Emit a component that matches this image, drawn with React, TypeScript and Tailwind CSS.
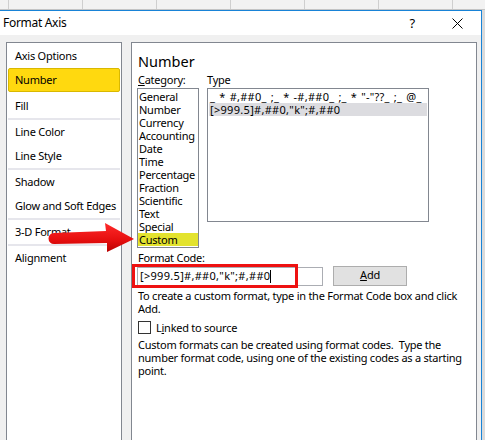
import React from "react";

const leftItems: (string | null)[] = [
  "Axis Options",
  "Number",
  "gap",
  "Fill",
  null,
  "Line Color",
  "Line Style",
  null,
  "Shadow",
  "Glow and Soft Edges",
  null,
  "3-D Format",
  null,
  "Alignment",
];

const categories = [
  "General",
  "Number",
  "Currency",
  "Accounting",
  "Date",
  "Time",
  "Percentage",
  "Fraction",
  "Scientific",
  "Text",
  "Special",
  "Custom",
];

export default function App() {
  return (
    <div className="relative w-[485px] h-[440px] overflow-hidden bg-[#f0f0f0] font-['Noto_Sans',sans-serif] text-[11px] tracking-[-0.25px] text-[#000]">
      {/* spreadsheet strip behind dialog */}
      <div className="flex h-[10px] bg-[#f2f2f2] border-b border-[#c4c4c4]">
        <div className="w-[8px] shrink-0" />
        {Array.from({ length: 7 }).map((_, i) => (
          <div key={i} className="w-[74px] shrink-0 border-l border-[#cfcfcf]" />
        ))}
      </div>

      <div className="flex h-[430px]">
        <div className="w-[482px] shrink-0 flex flex-col border-t border-r border-[#1883d7]">
          {/* title bar */}
          <div className="h-[24px] shrink-0 bg-white flex items-center">
            <span className="pl-[3px] text-[12px] tracking-[-0.3px] leading-none">Format Axis</span>
            <span className="ml-auto text-[13px] leading-none mr-[37px]">?</span>
            <svg width="11" height="11" viewBox="0 0 11 11" className="mr-[18px]">
              <path d="M0.5 0.5 L10.5 10.5 M10.5 0.5 L0.5 10.5" stroke="#000" strokeWidth="1" />
            </svg>
          </div>

          {/* body */}
          <div className="flex-1 flex pl-[6px] pt-[7px] gap-[9px]">
            {/* left nav panel */}
            <div className="w-[116px] h-[420px] shrink-0 bg-white border border-[#828790] pt-[1px] px-[1px]">
              {leftItems.map((it, i) => {
                if (it === null)
                  return <div key={i} className="h-[2px] bg-[#e6e6ec]" />;
                if (it === "gap") return <div key={i} className="h-[2px]" />;
                if (it === "Number")
                  return (
                    <div
                      key={i}
                      className="h-[24px] flex items-center pl-[6px] bg-[#ffd90f] border border-[#d9b800] rounded-[2px] whitespace-nowrap"
                    >
                      {it}
                    </div>
                  );
                return (
                  <div key={i} className="h-[24px] flex items-center pl-[7px] whitespace-nowrap">
                    {it}
                  </div>
                );
              })}
            </div>

            {/* right content panel */}
            <div className="w-[346px] h-[420px] shrink-0 bg-white border border-[#828790] pl-[5px] pt-[8px]">
              <div className="text-[14.5px] tracking-normal leading-[20px] pl-[1px]">Number</div>
              <div className="flex gap-[8px] mt-[2px] leading-[14px]">
                <div className="w-[62px] pl-[1px]">
                  <span className="underline">C</span>ategory:
                </div>
                <div>Type</div>
              </div>
              <div className="flex gap-[8px] mt-[1px] items-start">
                <div className="w-[62px] h-[160px] border border-[#828790] bg-white pt-[1px] flex flex-col">
                  {categories.map((c) => (
                    <div
                      key={c}
                      className={
                        "h-[13px] leading-[13px] pl-[1px] whitespace-nowrap " +
                        (c === "Custom" ? "bg-[#e3e32e]" : "")
                      }
                    >
                      {c}
                    </div>
                  ))}
                </div>
                <div className="w-[222px] h-[134px] border border-[#828790] bg-white pt-[1px] px-[1px]">
                  <div className="h-[13px] leading-[13px] whitespace-pre pl-[1px] tracking-[0.25px] [word-spacing:1px]">
                    _ * #,##0_ ;_ * -#,##0_ ;_ * "-"??_ ;_ @_
                  </div>
                  <div className="h-[13px] leading-[13px] whitespace-nowrap bg-[#dcdce0] pl-[1px] tracking-[0.3px]">
                    [&gt;999.5]#,##0,"k";#,##0
                  </div>
                </div>
              </div>

              <div className="mt-[3px] leading-[14px] pl-[1px]">Format Code:</div>
              <div className="flex items-center mt-[2px] gap-[10px]">
                <div className="w-[186px] h-[19px] border border-[#abadb3] bg-white flex items-center pl-[2px] whitespace-nowrap">
                  <span className="tracking-[0.3px]">[&gt;999.5]#,##0,"k";#,##0</span>
                  <span className="w-[1px] h-[13px] bg-black" />
                </div>
                <div className="w-[74px] h-[20px] border border-[#adadad] bg-[#e1e1e1] flex items-center justify-center -mt-[2px]">
                  <span>
                    <span className="underline">A</span>dd
                  </span>
                </div>
              </div>

              <div className="mt-[3px] leading-[13px] pl-[1px] whitespace-nowrap">
                To create a custom format, type in the Format Code box and click
                <br />
                Add.
              </div>

              <div className="flex items-center mt-[6px] gap-[5px] pl-[1px]">
                <div className="w-[13px] h-[13px] border border-[#333] bg-white" />
                <span className="leading-[13px]">
                  L<span className="underline">i</span>nked to source
                </span>
              </div>

              <div className="mt-[4px] leading-[13px] pl-[1px] whitespace-nowrap">
                Custom formats can be created using format codes.&nbsp; Type the
                <br />
                number format code, using one of the existing codes as a starting
                <br />
                point.
              </div>
            </div>
          </div>
        </div>
        <div className="flex-1 bg-[#dadada]" />
      </div>

      {/* annotation: red box around format code */}
      <div className="absolute left-[132px] top-[264px] w-[166px] h-[24px] border-[3px] border-[#ee1111]" />

      {/* annotation: red arrow */}
      <svg className="absolute left-0 top-0 pointer-events-none" width="485" height="440" viewBox="0 0 485 440">
        <defs>
          <linearGradient id="arr" x1="0" y1="0" x2="0" y2="1">
            <stop offset="0" stopColor="#ff2a2a" />
            <stop offset="0.6" stopColor="#e50e0e" />
            <stop offset="1" stopColor="#b80000" />
          </linearGradient>
        </defs>
        <path
          d="M54 233 L106 231 L105 223 L134 239 L107 252 L107 243 L54 244 A5.5 5.5 0 0 1 54 233 Z"
          fill="url(#arr)"
        />
      </svg>
    </div>
  );
}
